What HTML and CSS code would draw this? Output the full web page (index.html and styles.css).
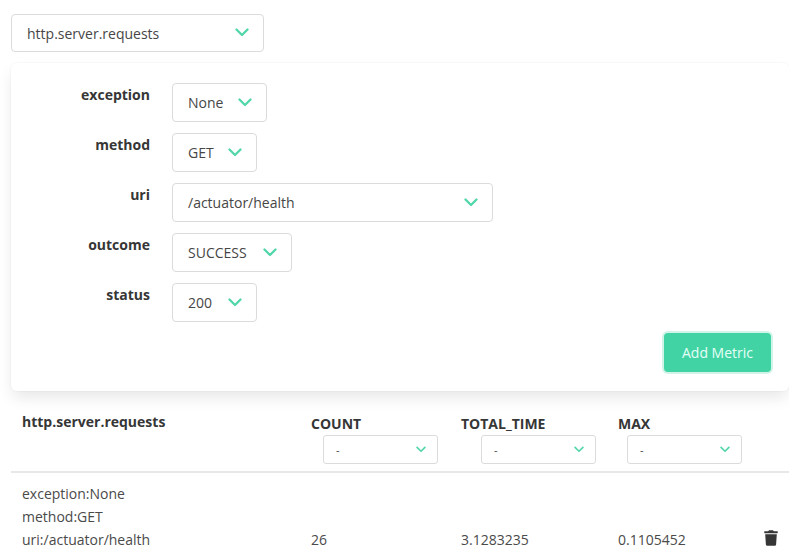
FILE: index.html
```html
<!DOCTYPE html>
<html lang="en">
<head>
<meta charset="utf-8">
<title>Metrics</title>
<link rel="stylesheet" href="styles.css">
</head>
<body>
<svg class="defs" width="0" height="0">
  <symbol id="chevron" viewBox="0 0 14 9"><path d="M1.5 1.5 7 7l5.500-5.500" fill="none" stroke="#51d6aa" stroke-width="2.300" stroke-linecap="round" stroke-linejoin="round"/></symbol>
</svg>
<main class="page">
  <div class="select select-metric"><span>http.server.requests</span><svg class="chevron"><use href="#chevron"/></svg></div>
  <section class="box">
    <div class="field"><label>exception</label><div class="select w-none"><span>None</span><svg class="chevron"><use href="#chevron"/></svg></div></div>
    <div class="field"><label>method</label><div class="select w-get"><span>GET</span><svg class="chevron"><use href="#chevron"/></svg></div></div>
    <div class="field"><label>uri</label><div class="select w-uri"><span>/actuator/health</span><svg class="chevron"><use href="#chevron"/></svg></div></div>
    <div class="field"><label>outcome</label><div class="select w-success"><span class="caps">SUCCESS</span><svg class="chevron"><use href="#chevron"/></svg></div></div>
    <div class="field"><label>status</label><div class="select w-get"><span>200</span><svg class="chevron"><use href="#chevron"/></svg></div></div>
    <div class="actions"><button class="button">Add Metric</button></div>
  </section>
  <div class="table">
    <div class="row head">
      <div class="name">http.server.requests</div>
      <div class="col"><span class="title">COUNT</span><div class="select small"><span>-</span><svg class="chevron"><use href="#chevron"/></svg></div></div>
      <div class="col"><span class="title total">TOTAL_TIME</span><div class="select small shifted"><span>-</span><svg class="chevron"><use href="#chevron"/></svg></div></div>
      <div class="col"><span class="title">MAX</span><div class="select small near"><span>-</span><svg class="chevron"><use href="#chevron"/></svg></div></div>
    </div>
    <div class="row body">
      <div class="tags"><span class="tag-exception">exception:None</span><br><span class="tag-method">method:GET</span><br><span class="tag-uri">uri:/actuator/health</span></div>
      <div>26</div>
      <div>3.1283235</div>
      <div>0.1105452</div>
      <div class="trash"><svg width="14" height="16" viewBox="0 0 14 16" fill="#363636"><path d="M.3 1.200h3.900L5 .2h4l.8 1h3.900v2H.3zM1.200 4.200h11.600l-.7 10.200q-.1 1.300-1.400 1.300H3.300q-1.300 0-1.400-1.300z"/></svg></div>
    </div>
  </div>
</main>
</body>
</html>
```
FILE: styles.css
```css
* { box-sizing: border-box; }
html, body { margin: 0; height: 551px; overflow: hidden; background: #fff; }
body { color: #4a4a4a; font: 14px/24px "Open Sans", "Noto Sans", sans-serif; }
.defs { position: absolute; }
.page { padding: 14px 0 0 11px; width: 789px; }
.select { display: flex; align-items: center; justify-content: space-between; height: 39px; padding: 1px 14px 0 15px; border: 1px solid #dbdbdb; border-radius: 4px; background: #fff; color: #464646; white-space: nowrap; }
.select-metric { width: 253px; height: 38px; }
.chevron { width: 14px; height: 9px; flex: none; margin-top: -2px; }
.box { height: 328px; margin-top: 11px; padding: 20px 18px 0 0; border-radius: 6px; background: #fff; box-shadow: 0 8px 16px -2px rgba(10, 10, 10, .1), 0 0 0 1px rgba(10, 10, 10, .02); }
.field { display: flex; height: 50px; }
.field label { width: 139px; margin-right: 22px; text-align: right; font-weight: 700; color: #363636; }
.w-none { width: 95px; }
.w-get { width: 85px; }
.w-uri { width: 321px; }
.w-success { width: 120px; }
.actions { display: flex; justify-content: flex-end; }
.button { width: 107px; height: 39px; padding: 0; border: 0; border-radius: 4px; background: #42d3a5; color: #e5fff6; font: inherit; box-shadow: 0 0 0 2px rgba(66, 211, 165, .25); }
.table { margin-top: 11px; }
.row { display: grid; grid-template-columns: 289px 150px 157px 142px 1fr; padding-left: 11px; }
.head { height: 71px; border-bottom: 2px solid #e8e8e8; font-weight: 700; color: #363636; }
.name { padding-top: 8px; }
.col { padding-top: 10px; }
.title { display: block; height: 23px; }
.small { width: 115px; height: 29px; margin-left: 12px; padding: 1px 11px 0 12px; border-radius: 3px; font-size: 11px; font-weight: 400; }
.small .chevron { width: 10px; height: 7px; }
.shifted { margin-left: 20px; }
.near { margin-left: 9px; }
.body { height: 78px; align-items: end; line-height: 23px; }
.trash { display: flex; padding: 0 0 5px 4px; }
```
